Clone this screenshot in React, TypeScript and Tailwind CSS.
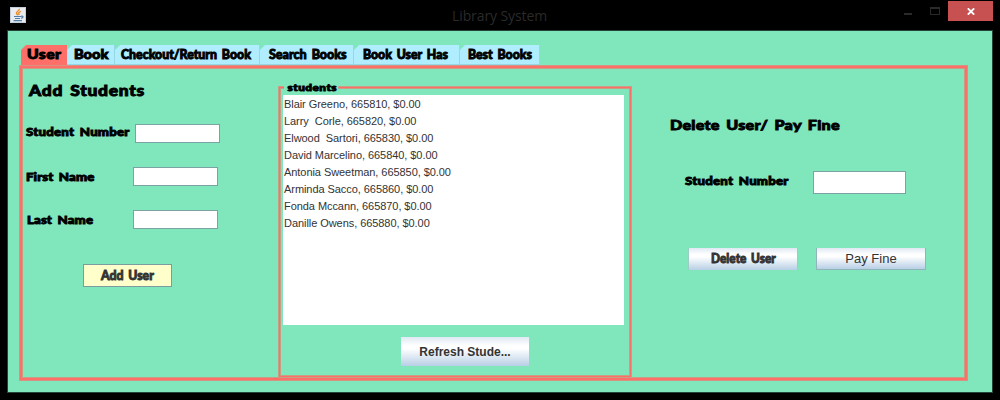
import type { ReactNode } from "react";

const tabs = [
  { label: "User", box: "w-[46px]", text: "ml-[6px] scale-x-[1.25] tracking-[0.4px]", active: true },
  { label: "Book", box: "w-[48px]", text: "ml-[7px] scale-x-[1.17]" },
  { label: "Checkout/Return Book", box: "w-[145px]", text: "ml-[6px] scale-x-[0.985]" },
  { label: "Search Books", box: "w-[94px]", text: "ml-[9px]" },
  { label: "Book User Has", box: "w-[106px]", text: "ml-[9px] scale-x-[0.98]" },
  { label: "Best Books", box: "w-[80px]", text: "ml-[8px] scale-x-[0.98]" },
];

const students = [
  "Blair Greeno, 665810, $0.00",
  "Larry  Corle, 665820, $0.00",
  "Elwood  Sartori, 665830, $0.00",
  "David Marcelino, 665840, $0.00",
  "Antonia Sweetman, 665850, $0.00",
  "Arminda Sacco, 665860, $0.00",
  "Fonda Mccann, 665870, $0.00",
  "Danille Owens, 665880, $0.00",
];

function Heavy({ className = "", children }: { className?: string; children: ReactNode }) {
  return (
    <span className={`block origin-left whitespace-pre font-['Lato',sans-serif] font-black [-webkit-text-stroke:0.9px_currentColor] [word-spacing:2px] ${className}`}>
      {children}
    </span>
  );
}

function Field({ className = "" }: { className?: string }) {
  return <input type="text" className={`block border border-[#7ba3a3] bg-white outline-none ${className}`} />;
}

function JavaIcon() {
  return (
    <svg width="16" height="16" viewBox="0 0 16 16" className="shrink-0">
      <rect width="16" height="16" rx="1" fill="#e8ecf0" />
      <rect x="0.5" y="0.5" width="15" height="15" fill="none" stroke="#c3ced8" />
      <path d="M9.300 1.800 C10 4 5.500 4.500 6.500 6.500 L8 8.300 M11 4.300 C8.300 5.300 8.300 6.200 9.300 7.800" fill="none" stroke="#e98b2c" strokeWidth="1.400" />
      <path d="M4 9.500 H11 M5 11.500 H10 M3.500 13.600 H12 M11 9.300 C14 8.500 13.500 11 11 11.300" fill="none" stroke="#4f7fa8" strokeWidth="1.100" />
    </svg>
  );
}

export default function App() {
  return (
    <div className="flex h-[400px] w-[1000px] flex-col overflow-hidden bg-black">
      <header className="flex h-[30px] items-start">
        <div className="ml-[10px] mt-[7px]"><JavaIcon /></div>
        <h1 className="ml-[426px] mt-[6px] w-[110px] whitespace-nowrap font-['Open_Sans',sans-serif] text-[14px] leading-[20px] tracking-[-0.1px] text-[#2a2a2a]">
          Library System
        </h1>
        <div className="ml-[342px] mt-[13px] h-[2px] w-[8px] bg-[#2a2a2a]" />
        <div className="ml-[18px] mt-[7px] h-[8px] w-[10px] border border-t-2 border-[#2a2a2a]" />
        <button className="ml-[8px] mt-px flex h-[20px] w-[45px] items-center justify-center bg-[#c75050]">
          <svg width="8" height="7" viewBox="0 0 8 7"><path d="M0.800 0.300 L7.200 6.700 M7.200 0.300 L0.800 6.700" stroke="#fff" strokeWidth="1.800" /></svg>
        </button>
      </header>

      <main className="mx-[7px] h-[363px] w-[986px] border border-[#26443a] bg-[#80e6bb] pl-[11px] pt-[14px]">
        <nav className="ml-[2px] flex h-[20px] items-start">
          {tabs.map((tab) => (
            <button
              key={tab.label}
              className={`flex h-[20px] shrink-0 [clip-path:polygon(0_5px,5px_0,100%_0,100%_100%,0_100%)] ${tab.box} ${
                tab.active ? "bg-[#ff6f69]" : "border-b border-r border-[#96d7e6] bg-[#b0edff]"
              }`}
            >
              <Heavy className={`text-[12.5px] leading-[19px] text-black ${tab.text}`}>{tab.label}</Heavy>
            </button>
          ))}
        </nav>

        <section className="ml-px mt-px flex h-[314px] w-[947px] border-2 border-[#ff6f69] shadow-[0_0_0_1px_#d59380,inset_0_0_0_1px_#c99d84]">
          <div className="w-[256px] shrink-0">
            <Heavy className="ml-[7px] mt-[13px] scale-x-[1.2] text-[14.5px] leading-[20px] tracking-[0.6px]">Add Students</Heavy>
            <div className="mt-[23px] flex h-[20px]">
              <Heavy className="ml-[4px] w-[109px] scale-x-[1.15] text-[11.5px] leading-[16px] tracking-[0.2px]">Student Number</Heavy>
              <Field className="h-[19px] w-[85px]" />
            </div>
            <div className="mt-[23px] flex h-[20px]">
              <Heavy className="ml-[4px] w-[107px] scale-x-[1.15] text-[11.5px] leading-[20px] tracking-[0.1px]">First Name</Heavy>
              <Field className="h-[19px] w-[85px]" />
            </div>
            <div className="mt-[23px] flex h-[20px]">
              <Heavy className="ml-[5px] w-[106px] scale-x-[1.15] text-[11.5px] leading-[20px] tracking-[0.1px]">Last Name</Heavy>
              <Field className="h-[19px] w-[85px]" />
            </div>
            <button className="ml-[61px] mt-[34px] flex h-[23px] w-[89px] border border-[#7b9da0] bg-[#ffffcc] pl-[17px]">
              <Heavy className="scale-x-[0.91] text-[13.5px] leading-[21px] text-[#333]">Add User</Heavy>
            </button>
          </div>

          <div className="relative ml-px mt-[19px] h-[290px] w-[352px] shrink-0 border border-[#ff6f69] pl-[3px] pt-[7px] shadow-[0_0_0_1px_#c99d84,inset_0_0_0_1px_#c99d84]">
            <Heavy className="absolute -top-[8px] left-[4px] scale-x-[1.18] bg-[#80e6bb] pl-[3px] pr-px text-[10px] leading-[14px] tracking-[0.4px]">students</Heavy>
            <ul className="h-[230px] w-[341px] bg-white pt-px">
              {students.map((s) => (
                <li key={s} className="h-[17px] whitespace-pre pl-px font-['Liberation_Sans',sans-serif] text-[11px] leading-[17px] tracking-[-0.06px] text-[#333]">{s}</li>
              ))}
            </ul>
            <button className="ml-[118px] mt-[12px] block h-[29px] w-[128px] bg-[linear-gradient(#dfe9f3,#fff_30%,#fff_40%,#b8cfe5)] font-['Liberation_Sans',sans-serif] text-[12px] font-bold text-[#333]">
              Refresh Stude...
            </button>
          </div>

          <div className="flex-1">
            <Heavy className="ml-[39px] mt-[47px] scale-x-[1.15] text-[14px] leading-[20px] tracking-[0.25px]">Delete User/ Pay Fine</Heavy>
            <div className="mt-[36px] flex h-[23px]">
              <Heavy className="ml-[54px] w-[128px] scale-x-[1.15] text-[11.5px] leading-[20px] tracking-[0.2px]">Student Number</Heavy>
              <Field className="h-[23px] w-[93px]" />
            </div>
            <div className="mt-[54px] flex">
              <button className="ml-[57px] flex h-[22px] w-[110px] border-x border-[#9bcdc5] bg-[linear-gradient(#dfe9f3,#fff_30%,#fff_40%,#b8cfe5)]">
                <Heavy className="ml-[22px] scale-x-[0.88] text-[13.5px] leading-[21px] text-[#333]">Delete User</Heavy>
              </button>
              <button className="ml-[18px] h-[22px] w-[110px] border border-t-0 border-[#8fb5bb] bg-[linear-gradient(#dfe9f3,#fff_30%,#fff_40%,#b8cfe5)] font-['Liberation_Sans',sans-serif] text-[13px] leading-[21px] text-[#333]">
                Pay Fine
              </button>
            </div>
          </div>
        </section>
      </main>
    </div>
  );
}
